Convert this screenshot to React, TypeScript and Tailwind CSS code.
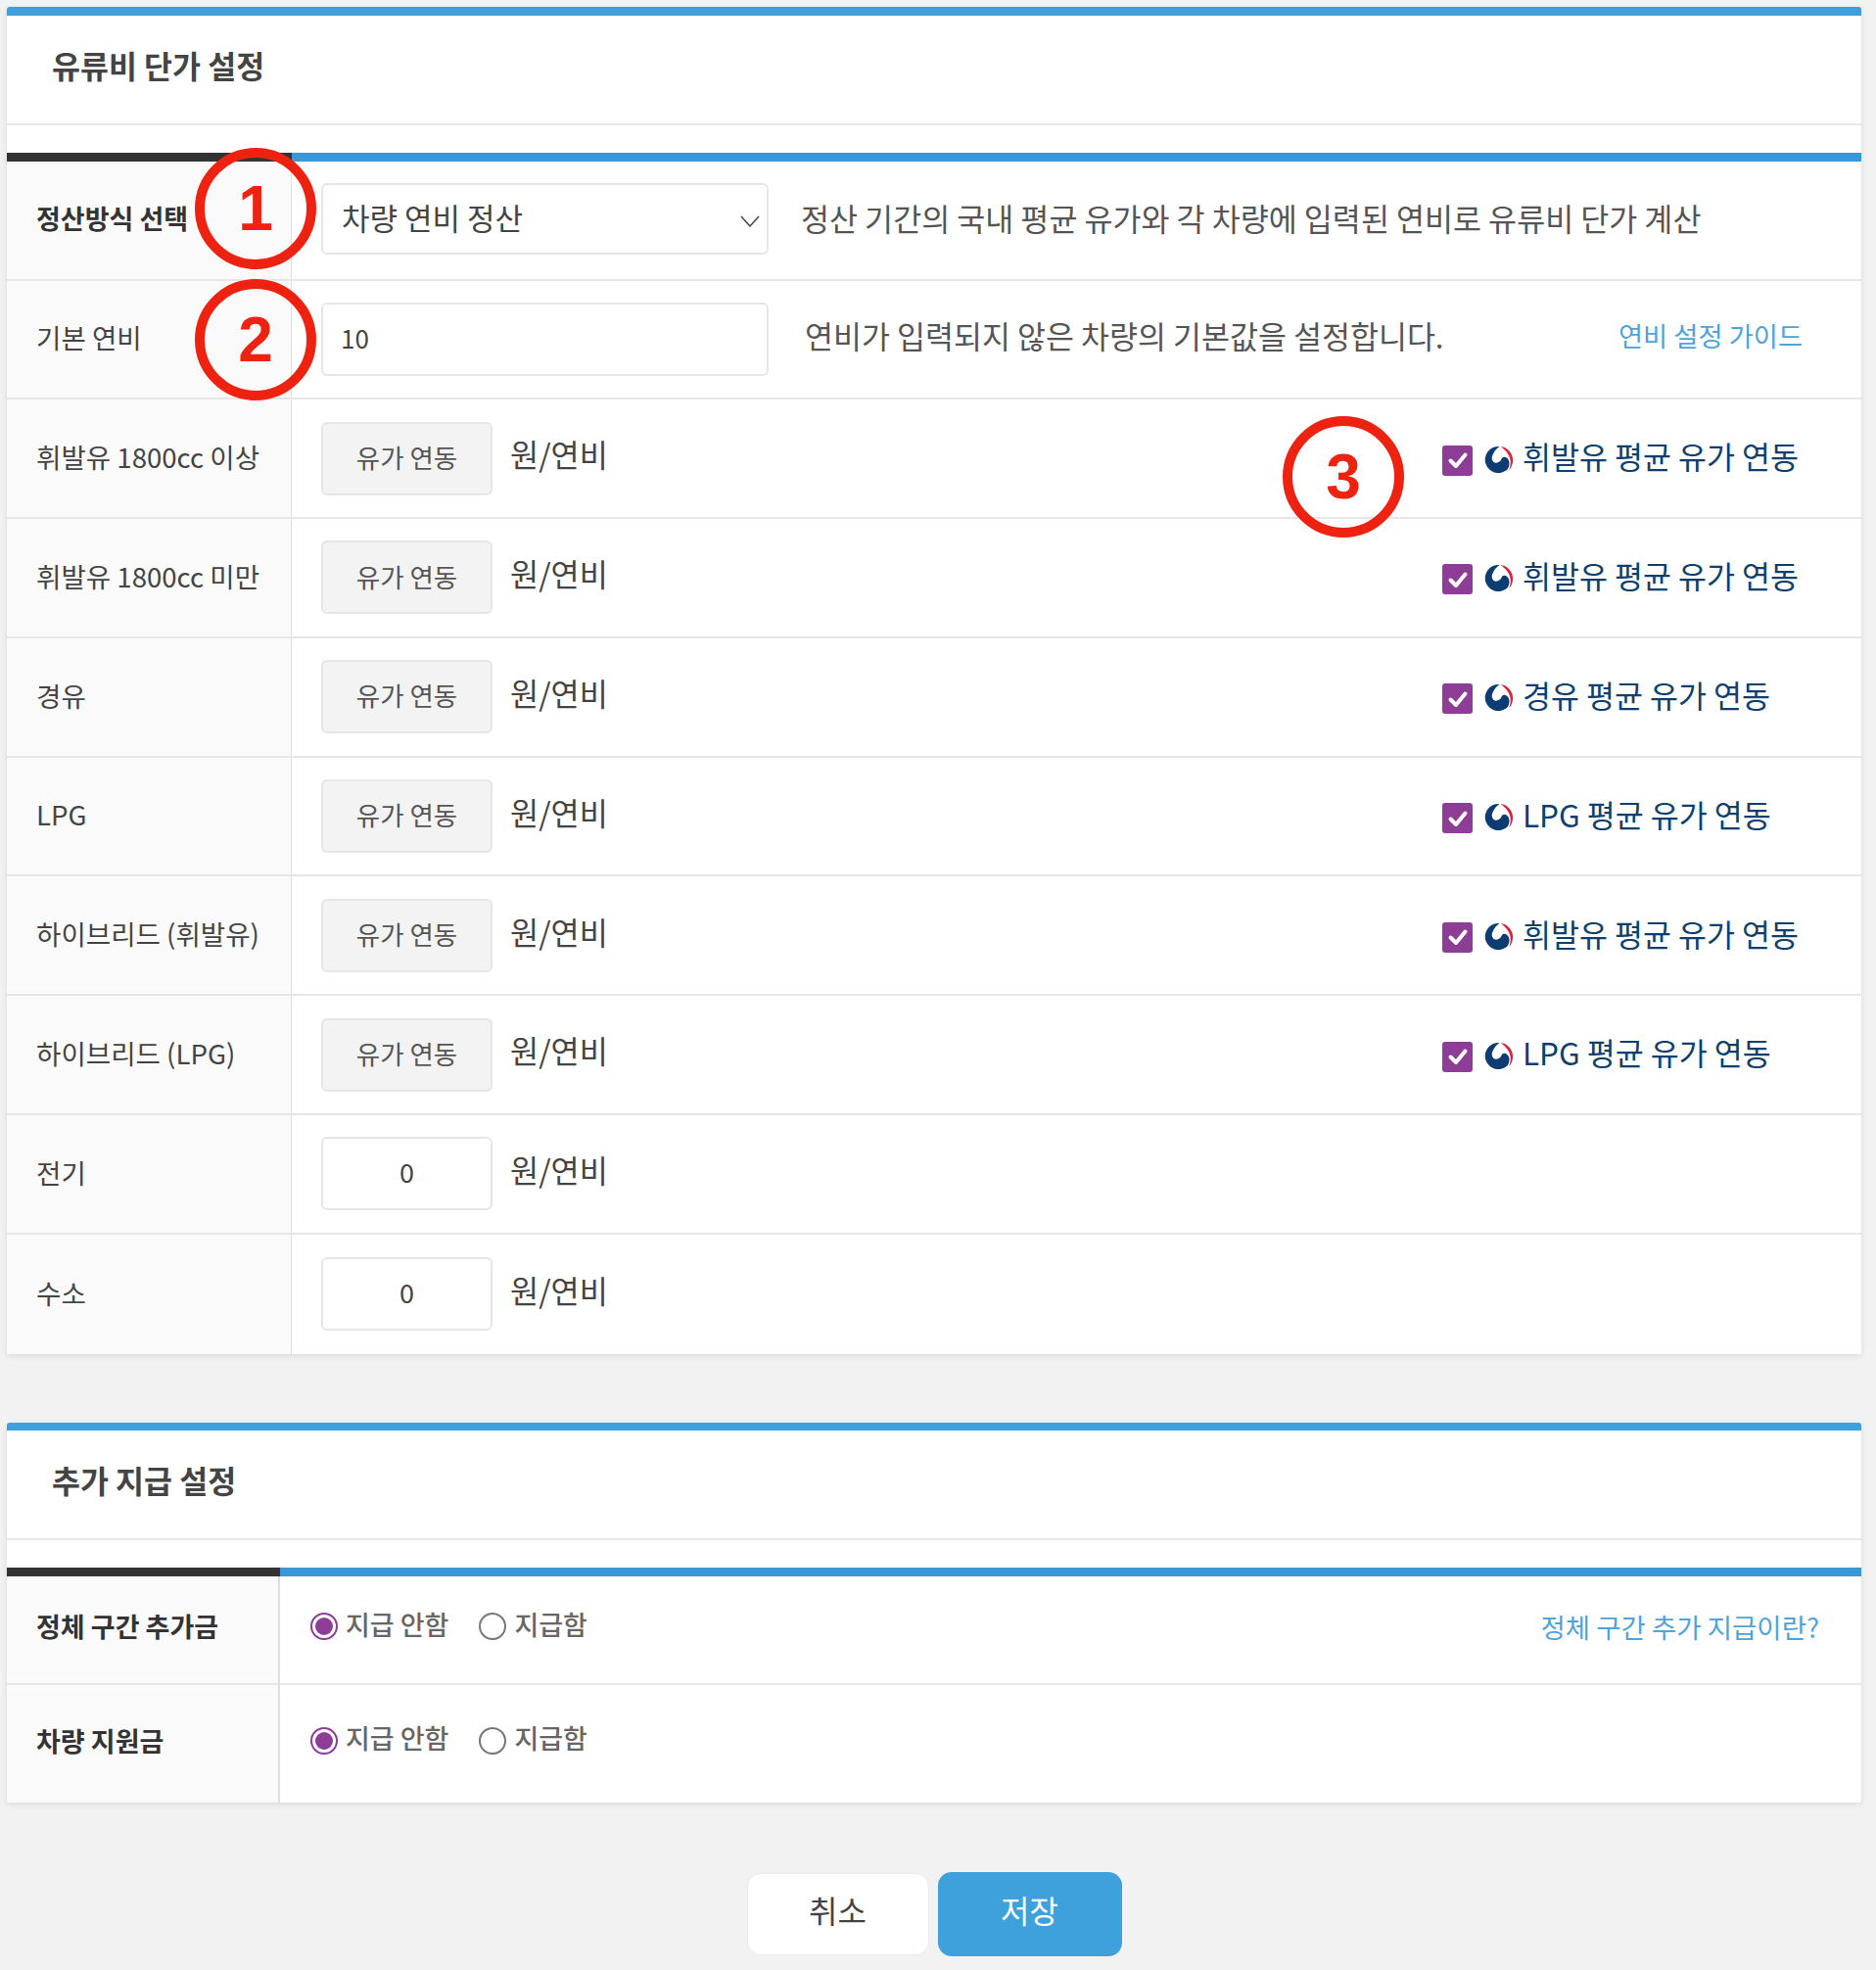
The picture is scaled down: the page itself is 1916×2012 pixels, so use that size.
const font = "font-['Noto_Sans_CJK_KR','Noto_Sans',sans-serif]";

function Flag() {
  return (
    <svg viewBox="0 0 32 32" className="w-[31px] h-[31px] shrink-0">
      <path d="M16 2 A14 14 0 1 0 24.500 26 C27 22 27 17 24 14.500 C22 12.500 19 13 18 15.500 C17 18 14 20 11 19 C8 18 7 14 9 10.500 C10.500 7 13 4 16 2 Z" fill="#0c3c72" />
      <path d="M17 2 C24 2.500 30 9 30 16 C30 20 29 24 26 27 C28 22 28.500 15 25 10 C23 7 20 4 17 2 Z" fill="#d9243c" />
    </svg>
  );
}

function LinkedCheck({ text }: { text: string }) {
  return (
    <div className="ml-auto w-[428px] flex items-center shrink-0">
      <span className="w-[31px] h-[31px] mt-[4px] rounded-[3px] bg-[#8e3d96] flex items-center justify-center shrink-0">
        <svg viewBox="0 0 24 24" className="w-[24px] h-[24px]" fill="none" stroke="#ffffff" strokeWidth="4" strokeLinecap="round" strokeLinejoin="round">
          <path d="M4.500 12.500 L10 18 L19.500 6.500" />
        </svg>
      </span>
      <span className="ml-[12px] mt-[2px]"><Flag /></span>
      <span className="ml-[8px] text-[31.5px] leading-none text-[#0f3f6e] -mt-[4px] whitespace-nowrap">{text}</span>
    </div>
  );
}

function Row({ label, bold, children, first }: { label: string; bold?: boolean; children: React.ReactNode; first?: boolean }) {
  return (
    <div className={`flex ${first ? "h-[121.5px]" : "h-[121.8px]"} border-b-2 border-[#e6e6e6] last:border-b-0`}>
      <div className={`w-[291px] shrink-0 bg-[#fafafa] border-r border-[#dedede] pl-[30px] pb-[3px] flex items-center whitespace-nowrap ${bold ? "text-[27px] font-semibold text-[#333]" : "text-[27.6px] text-[#444]"}`}>
        {label}
      </div>
      <div className="flex-1 flex items-center pl-[30px]">{children}</div>
    </div>
  );
}

function Unit() {
  return <span className="ml-[18px] -mt-[8px] text-[31.7px] leading-none text-[#444] whitespace-nowrap">원/연비</span>;
}

function LockedPrice({ text }: { text: string }) {
  return (
    <>
      <div className="w-[175px] h-[75px] rounded-[6px] border-2 border-[#e6e6e6] bg-[#f3f3f3] pb-[3px] flex items-center justify-center text-[26.5px] text-[#555]">유가 연동</div>
      <Unit />
      <LinkedCheck text={text} />
    </>
  );
}

function ZeroPrice() {
  return (
    <>
      <input readOnly defaultValue="0" className="w-[175px] h-[75px] rounded-[6px] border-2 border-[#e6e6e6] bg-white pb-[4px] text-center text-[27px] text-[#444] outline-none" />
      <Unit />
    </>
  );
}

function Radio({ checked, text }: { checked?: boolean; text: string }) {
  return (
    <label className="flex items-center">
      <span className={`w-[28px] h-[28px] rounded-full border-2 flex items-center justify-center shrink-0 bg-white ${checked ? "border-[#8e3d96]" : "border-[#777]"}`}>
        {checked && <span className="w-[18px] h-[18px] rounded-full bg-[#8e3d96]" />}
      </span>
      <span className="ml-[8px] -mt-[6px] text-[27px] font-medium leading-none text-[#666] whitespace-nowrap">{text}</span>
    </label>
  );
}

function Payment() {
  return (
    <div className="flex items-center -mt-[6px] gap-[31px]">
      <Radio checked text="지급 안함" />
      <Radio text="지급함" />
    </div>
  );
}

function Marker({ n, className }: { n: number; className: string }) {
  return (
    <div className={`absolute w-[124px] h-[124px] rounded-full border-[10px] border-[#ee2211] flex items-center justify-center font-['Liberation_Sans',sans-serif] font-bold text-[64px] leading-none text-[#ee2211] ${className}`}>
      {n}
    </div>
  );
}

function CardHead({ title, left }: { title: string; left: string }) {
  return (
    <>
      <div className="h-[112px] border-b-2 border-[#e6e6e6] pl-[46px] pb-[8px] flex items-center font-semibold text-[31.5px] text-[#444]">
        {title}
      </div>
      <div className="h-[28px]" />
      <div className="flex h-[9px]">
        <div className={`${left} bg-[#333333]`} />
        <div className="flex-1 bg-[#3a98d8]" />
      </div>
    </>
  );
}

export default function App() {
  const linked = [
    ["휘발유 1800cc 이상", "휘발유 평균 유가 연동"],
    ["휘발유 1800cc 미만", "휘발유 평균 유가 연동"],
    ["경유", "경유 평균 유가 연동"],
    ["LPG", "LPG 평균 유가 연동"],
    ["하이브리드 (휘발유)", "휘발유 평균 유가 연동"],
    ["하이브리드 (LPG)", "LPG 평균 유가 연동"],
  ];

  return (
    <div className={`${font} relative min-h-[2012px] bg-[#f2f2f2] pt-[7px] pl-[7px] pr-[15px]`}>
      <section className="bg-white border-t-[9px] border-[#3d9fdb] rounded-t-[3px] shadow-[0_2px_6px_rgba(0,0,0,0.1)]">
        <CardHead title="유류비 단가 설정" left="w-[291px]" />
        <Row label="정산방식 선택" bold first>
          <div className="relative w-[457px] h-[73px] rounded-[6px] border-2 border-[#e6e6e6] bg-white pb-[3px] flex items-center pl-[19px] text-[31px] text-[#444] -mt-[2px]">
            차량 연비 정산
            <svg viewBox="0 0 20 12" className="absolute right-[7px] top-[31px] w-[20px] h-[12px]" fill="none" stroke="#444" strokeWidth="1.500">
              <path d="M1 1 L10 11 L19 1" />
            </svg>
          </div>
          <span className="ml-[33px] -mt-[4px] text-[31.55px] leading-none text-[#555] whitespace-nowrap">정산 기간의 국내 평균 유가와 각 차량에 입력된 연비로 유류비 단가 계산</span>
        </Row>
        <Row label="기본 연비">
          <input readOnly defaultValue="10" className="w-[457px] h-[75px] rounded-[6px] border-2 border-[#e6e6e6] bg-white pl-[18px] pb-[3px] text-[26px] text-[#444] outline-none" />
          <span className="ml-[37px] -mt-[7px] text-[31.5px] leading-none text-[#555] whitespace-nowrap">연비가 입력되지 않은 차량의 기본값을 설정합니다.</span>
          <a className="ml-auto mr-[60px] -mt-[7px] text-[27.3px] leading-none text-[#4fa3d8] whitespace-nowrap">연비 설정 가이드</a>
        </Row>
        {linked.map(([label, text]) => (
          <Row key={label} label={label}>
            <LockedPrice text={text} />
          </Row>
        ))}
        <Row label="전기">
          <ZeroPrice />
        </Row>
        <Row label="수소">
          <ZeroPrice />
        </Row>
      </section>

      <section className="mt-[70px] bg-white border-t-[8px] border-[#3d9fdb] rounded-[3px] shadow-[0_2px_6px_rgba(0,0,0,0.1)]">
        <CardHead title="추가 지급 설정" left="w-[279px]" />
        <div className="flex h-[111px] border-b-2 border-[#e6e6e6]">
          <div className="w-[279px] shrink-0 bg-[#fafafa] border-r-2 border-[#e0e0e0] pl-[30px] pb-[5px] flex items-center text-[27px] font-semibold text-[#333]">정체 구간 추가금</div>
          <div className="flex-1 flex items-center pl-[31px]">
            <Payment />
            <a className="ml-auto mr-[43px] pb-[5px] text-[27.5px] leading-none text-[#4fa3d8] whitespace-nowrap">정체 구간 추가 지급이란?</a>
          </div>
        </div>
        <div className="flex h-[120px]">
          <div className="w-[279px] shrink-0 bg-[#fafafa] border-r-2 border-[#e0e0e0] pl-[30px] pb-[5px] flex items-center text-[27px] font-semibold text-[#333] rounded-bl-[3px]">차량 지원금</div>
          <div className="flex-1 flex items-center pl-[31px]">
            <Payment />
          </div>
        </div>
      </section>

      <div className="mt-[71px] flex justify-center items-center gap-[9px]">
        <button className="w-[186px] h-[84px] pb-[9px] rounded-[14px] border border-[#ebebeb] bg-white text-[32px] leading-none text-[#444]">취소</button>
        <button className="w-[188px] h-[86px] pb-[9px] rounded-[14px] bg-[#3fa1dc] text-[32px] leading-none text-white">저장</button>
      </div>

      <Marker n={1} className="left-[199px] top-[151px]" />
      <Marker n={2} className="left-[199px] top-[285px]" />
      <Marker n={3} className="left-[1310px] top-[425px]" />
    </div>
  );
}
